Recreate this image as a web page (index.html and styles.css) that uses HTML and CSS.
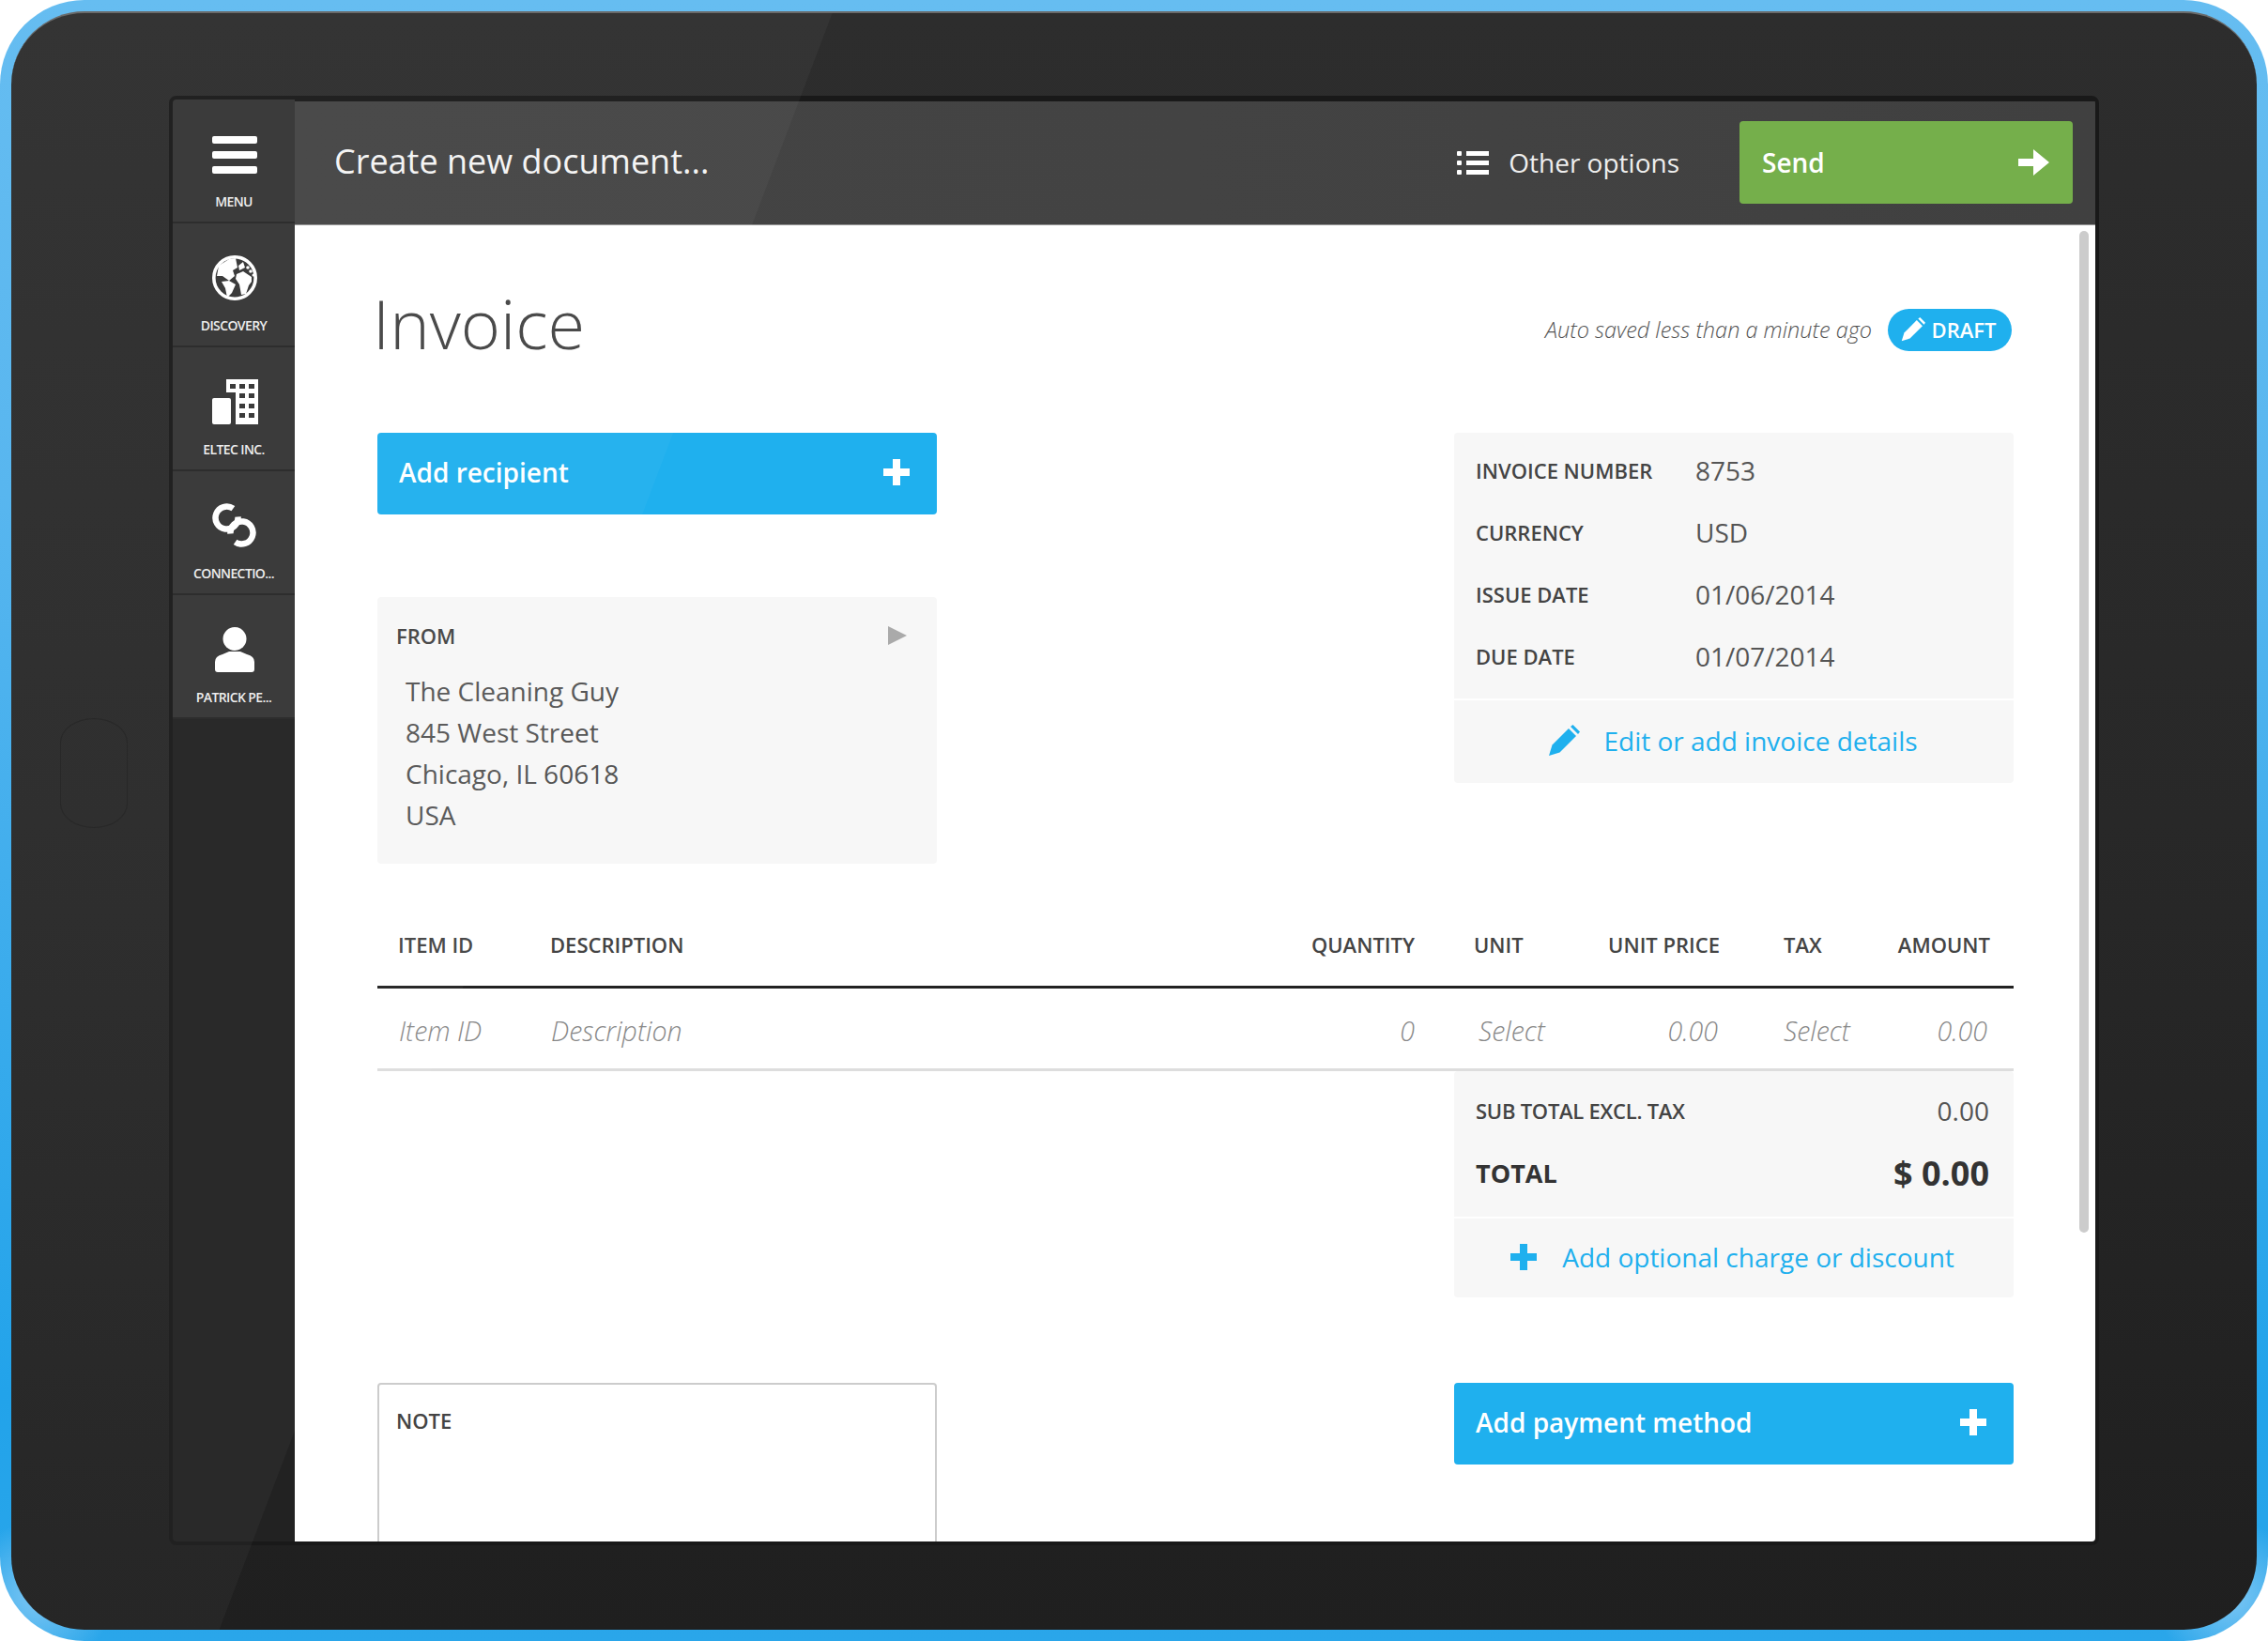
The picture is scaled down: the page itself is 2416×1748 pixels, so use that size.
FILE: index.html
```html
<!DOCTYPE html>
<html lang="en">
<head>
  <meta charset="utf-8">
  <title>Create new document</title>
  <link rel="stylesheet" href="styles.css">
</head>
<body>
<svg class="defs" width="0" height="0">
  <symbol id="pencil" viewBox="0 0 34 34">
    <path d="M1 33 L4.500 21.500 L22 4 L30 12 L12.500 29.500 Z"/>
    <path d="M24 2 L26.500 0 L34 7.500 L32 10 Z"/>
  </symbol>
  <symbol id="plus" viewBox="0 0 28 28">
    <path d="M10 0 H18 V10 H28 V18 H18 V28 H10 V18 H0 V10 H10 Z"/>
  </symbol>
</svg>

<div class="device">
  <div class="bezel">
    <div class="home"></div>
    <div class="screen">

      <nav class="sidebar">
        <a class="side-item menu-item">
          <svg class="side-icon" viewBox="0 0 48 40" width="48" height="40">
            <rect x="0" y="0" width="48" height="8" rx="2"/>
            <rect x="0" y="16" width="48" height="8" rx="2"/>
            <rect x="0" y="32" width="48" height="8" rx="2"/>
          </svg>
          <span>MENU</span>
        </a>
        <a class="side-item">
          <svg class="side-icon" viewBox="0 0 48 48" width="48" height="48">
            <circle cx="24" cy="24" r="22.200" fill="#343434" stroke="#fff" stroke-width="3.600"/>
            <path d="M7 11 L18 4 L25 3 L27 13 L22 16 L24 22 L18 27 L11 22 L5 22 Z"/>
            <path d="M10 28 L18 27 L25 31 L21 40 L16 45 L14 35 Z"/>
            <path d="M26 20 L33 17 L42 23 L42 28 L39 32 L36 41 L31 42 L29 31 L25 25 Z"/>
            <path d="M28 11 L33 7 L35 13 L29 16 Z"/>
            <circle cx="38" cy="13" r="1.800"/>
            <circle cx="41" cy="17" r="1.800"/>
            <circle cx="44" cy="21" r="1.500"/>
          </svg>
          <span>DISCOVERY</span>
        </a>
        <a class="side-item">
          <svg class="side-icon" viewBox="0 0 49 48" width="49" height="48">
            <rect x="0" y="20" width="20" height="28" rx="2"/>
            <path fill-rule="evenodd" d="M15 0 H49 V48 H25 V14 H15 Z M19 5 V10 H25 V5 Z M29 5 V10 H35 V5 Z M39 5 V10 H45 V5 Z M29 15 V20 H35 V15 Z M39 15 V20 H45 V15 Z M29 26 V31 H35 V26 Z M39 26 V31 H45 V26 Z M29 36 V41 H35 V36 Z M39 36 V41 H45 V36 Z"/>
          </svg>
          <span>ELTEC INC.</span>
        </a>
        <a class="side-item">
          <svg class="side-icon link-icon" viewBox="0 0 48 48" width="48" height="48">
            <path d="M22.400 5.700 A12 12 0 1 0 27.500 14.500"/>
            <path d="M24.600 41.300 A12 12 0 1 0 19.500 32.500"/>
          </svg>
          <span>CONNECTIO...</span>
        </a>
        <a class="side-item">
          <svg class="side-icon" viewBox="0 0 42 48" width="42" height="48">
            <circle cx="21" cy="12.500" r="12.500"/>
            <path d="M0 45 V37 Q0 31 8 29 L15 26 H27 L34 29 Q42 31 42 37 V45 Q42 48 39 48 H3 Q0 48 0 45 Z"/>
          </svg>
          <span>PATRICK PE...</span>
        </a>
      </nav>

      <div class="main">
        <header class="topbar">
          <div class="doc-title">Create new document...</div>
          <div class="options">
            <svg viewBox="0 0 34 28" width="34" height="28" fill="#fff">
              <rect x="0" y="2" width="5" height="5" rx="1"/>
              <rect x="0" y="12" width="5" height="5" rx="1"/>
              <rect x="0" y="22" width="5" height="5" rx="1"/>
              <rect x="10" y="2" width="24" height="5"/>
              <rect x="10" y="12" width="24" height="5"/>
              <rect x="10" y="22" width="24" height="5"/>
            </svg>
            <span>Other options</span>
          </div>
          <a class="send-btn">
            <span>Send</span>
            <svg viewBox="0 0 33 28" width="33" height="28" fill="#fff">
              <path d="M0 10 H16 V0 L33 14 L16 28 V18 H0 Z"/>
            </svg>
          </a>
        </header>

        <section class="content">
          <div class="scrollbar"></div>

          <div class="title-row">
            <h1>Invoice</h1>
            <div class="status">
              <span class="saved">Auto saved less than a minute ago</span>
              <span class="draft">
                <svg width="26" height="26"><use href="#pencil"/></svg>
                DRAFT
              </span>
            </div>
          </div>

          <div class="two-col top-row">
            <div class="col">
              <a class="big-btn"><span>Add recipient</span><svg width="28" height="28"><use href="#plus"/></svg></a>
              <div class="from-box">
                <div class="from-head">
                  <span class="label">FROM</span>
                  <i class="tri"></i>
                </div>
                <div class="address">
                  <div>The Cleaning Guy</div>
                  <div>845 West Street</div>
                  <div>Chicago, IL 60618</div>
                  <div>USA</div>
                </div>
              </div>
            </div>

            <div class="col">
              <div class="panel">
                <div class="meta">
                  <div class="meta-row"><span class="label">INVOICE NUMBER</span><span>8753</span></div>
                  <div class="meta-row"><span class="label">CURRENCY</span><span>USD</span></div>
                  <div class="meta-row"><span class="label">ISSUE DATE</span><span>01/06/2014</span></div>
                  <div class="meta-row"><span class="label">DUE DATE</span><span>01/07/2014</span></div>
                </div>
                <a class="panel-link edit-link">
                  <svg width="34" height="34"><use href="#pencil"/></svg>
                  <span>Edit or add invoice details</span>
                </a>
              </div>
            </div>
          </div>

          <div class="items">
            <div class="items-row items-head">
              <div>ITEM ID</div>
              <div>DESCRIPTION</div>
              <div class="num">QUANTITY</div>
              <div class="unit">UNIT</div>
              <div class="num">UNIT PRICE</div>
              <div class="tax">TAX</div>
              <div class="num">AMOUNT</div>
            </div>
            <div class="items-row items-blank">
              <div>Item ID</div>
              <div class="desc">Description</div>
              <div class="num">0</div>
              <div class="unit">Select</div>
              <div class="num price">0.00</div>
              <div class="tax">Select</div>
              <div class="num">0.00</div>
            </div>
          </div>

          <div class="panel totals">
            <div class="sums">
              <div class="sum-row"><span class="label sub-label">SUB TOTAL EXCL. TAX</span><span>0.00</span></div>
              <div class="sum-row grand"><span>TOTAL</span><span>$ 0.00</span></div>
            </div>
            <a class="panel-link charge-link">
              <svg width="28" height="28"><use href="#plus"/></svg>
              <span>Add optional charge or discount</span>
            </a>
          </div>

          <div class="two-col bottom-row">
            <div class="col">
              <div class="note"><span class="label">NOTE</span></div>
            </div>
            <div class="col">
              <a class="big-btn"><span>Add payment method</span><svg width="28" height="28"><use href="#plus"/></svg></a>
            </div>
          </div>
        </section>
      </div>

    </div>
    <div class="sheen"></div>
  </div>
</div>
</body>
</html>
```

FILE: styles.css
```css
html, body {
  margin: 0;
  background: #fff;
}
body {
  font-family: "Open Sans", "Liberation Sans", sans-serif;
  color: #444;
}
.defs {
  position: absolute;
}
a {
  display: block;
}

/* tablet frame */
.device {
  width: 2416px;
  height: 1748px;
  box-sizing: border-box;
  padding: 12px;
  border-radius: 90px;
  background:
    radial-gradient(circle 80px at 40px 1700px, #6cc0f2 20%, transparent 100%),
    radial-gradient(circle 80px at 2376px 1700px, #6cc0f2 20%, transparent 100%),
    linear-gradient(180deg, #66bdf1 0%, #58b6ef 30%, #22a3ea 85%, #2aa6ea 100%);
}
.bezel {
  position: relative;
  height: 1724px;
  box-sizing: border-box;
  padding: 88px 168px 0 168px;
  border-radius: 78px;
  border-top: 2px solid #6a6a6a;
  background: linear-gradient(180deg, #2d2d2d 0%, #282828 50%, #1f1f1f 100%);
  overflow: hidden;
}
.home {
  position: absolute;
  left: 52px;
  top: 751px;
  width: 72px;
  height: 117px;
  box-sizing: border-box;
  border: 1px solid #212121;
  border-radius: 36px / 26px;
}
.sheen {
  position: absolute;
  left: -12px;
  top: -14px;
  width: 2416px;
  height: 1748px;
  background: rgba(255, 255, 255, 0.035);
  clip-path: polygon(0 0, 892px 0, 229px 1748px, 0 1748px);
  pointer-events: none;
}
.screen {
  display: flex;
  height: 1536px;
  border: 4px solid #191919;
  border-radius: 8px;
  overflow: hidden;
  background: #222;
}

/* left rail */
.sidebar {
  width: 130px;
  flex: none;
}
.side-item {
  height: 130px;
  border-bottom: 2px solid #262626;
  background: #343434;
  display: flex;
  flex-direction: column;
  align-items: center;
  color: #eee;
  font-size: 14px;
  font-weight: 600;
  letter-spacing: -0.6px;
}
.side-item span {
  line-height: 20px;
  margin-top: 17px;
}
.side-icon {
  margin-top: 34px;
  margin-left: 2px;
  fill: #fff;
}
.menu-item .side-icon {
  margin-top: 39px;
}
.menu-item span {
  margin-top: 20px;
}
.link-icon {
  fill: none;
  stroke: #fff;
  stroke-width: 6.500;
}

.main {
  flex: 1;
  min-width: 0;
  display: flex;
  flex-direction: column;
}

/* top bar */
.topbar {
  height: 134px;
  flex: none;
  box-sizing: border-box;
  border-top: 2px solid #191919;
  border-bottom: 1px solid #999;
  background: linear-gradient(90deg, #444 0%, #434343 50%, #404040 100%);
  display: flex;
  align-items: center;
  padding: 0 24px 2px 42px;
  color: #fff;
}
.doc-title {
  flex: 1;
  font-size: 36px;
  color: #f4f4f4;
  margin-bottom: 2px;
}
.options {
  display: flex;
  align-items: center;
  gap: 21px;
  font-size: 28px;
  color: #eee;
  margin-right: 64px;
}
.send-btn {
  width: 355px;
  height: 88px;
  box-sizing: border-box;
  padding: 0 25px 0 24px;
  border-radius: 4px;
  background: #75af4b;
  display: flex;
  align-items: center;
  justify-content: space-between;
  font-size: 28px;
  font-weight: 600;
}

/* invoice body */
.content {
  position: relative;
  flex: 1;
  min-height: 0;
  overflow: hidden;
  padding: 0 87px 0 88px;
  background: #fff;
}
.scrollbar {
  position: absolute;
  right: 7px;
  top: 6px;
  width: 10px;
  height: 1067px;
  border-radius: 5px;
  background: #ccc;
}
.title-row {
  display: flex;
  justify-content: space-between;
  align-items: center;
  margin-top: 58px;
  height: 92px;
}
h1 {
  margin: 0 0 0 -5px;
  font-size: 72px;
  font-weight: 300;
  color: #444;
}
.status {
  display: flex;
  align-items: center;
  gap: 17px;
  margin-right: 2px;
  margin-top: 14px;
}
.saved {
  font-size: 23.500px;
  font-style: italic;
  font-weight: 300;
  color: #555;
}
.draft {
  width: 132px;
  height: 45px;
  box-sizing: border-box;
  padding-right: 3px;
  border-radius: 23px;
  background: #1fb0ee;
  color: #fff;
  fill: #fff;
  display: flex;
  align-items: center;
  justify-content: center;
  gap: 7px;
  font-size: 22px;
  font-weight: 600;
}
.two-col {
  display: flex;
  justify-content: space-between;
}
.col {
  width: 596px;
}
.top-row {
  margin-top: 71px;
}
.big-btn {
  height: 87px;
  box-sizing: border-box;
  padding: 0 29px 3px 23px;
  border-radius: 4px;
  background: #1fb0ee;
  color: #fff;
  fill: #fff;
  display: flex;
  align-items: center;
  justify-content: space-between;
  font-size: 28px;
  font-weight: 600;
}
.label {
  font-size: 22px;
  font-weight: 600;
  color: #444;
}
.from-box {
  margin-top: 88px;
  height: 284px;
  box-sizing: border-box;
  padding: 23px 32px 0 20px;
  border-radius: 4px;
  background: #f7f7f7;
}
.from-head {
  display: flex;
  justify-content: space-between;
  align-items: center;
  height: 36px;
}
.tri {
  width: 0;
  height: 0;
  border-left: 20px solid #aaa;
  border-top: 10px solid transparent;
  border-bottom: 10px solid transparent;
}
.address {
  margin: 19px 0 0 10px;
  font-size: 28px;
  line-height: 44px;
  color: #555;
}
.panel {
  border-radius: 4px;
  background: #f7f7f7;
}
.meta {
  padding: 7px 0 12px 23px;
}
.meta-row {
  display: grid;
  grid-template-columns: 234px 1fr;
  align-items: center;
  height: 66px;
  font-size: 28px;
  color: #555;
}
.panel-link {
  border-top: 2px solid #fff;
  display: flex;
  align-items: center;
  justify-content: center;
  box-sizing: border-box;
  padding-bottom: 3px;
  font-size: 28px;
  color: #1fb0ee;
  fill: #1fb0ee;
}
.edit-link {
  height: 90px;
  gap: 25px;
  padding-right: 2px;
}

/* line items */
.items {
  margin-top: 45px;
}
.items-row {
  display: grid;
  grid-template-columns: 184px 784px 137px 173px 152px 168px 145px;
  align-items: center;
  height: 85px;
}
.items-row .num {
  text-align: right;
}
.items-head {
  border-bottom: 3px solid #222;
  font-size: 22px;
  font-weight: 600;
  color: #444;
}
.items-head > div {
  margin-bottom: 4px;
}
.items-head > div:first-child {
  padding-left: 22px;
}
.items-head > div:last-child {
  padding-right: 25px;
}
.items-head .unit {
  padding-left: 63px;
}
.items-head .tax {
  padding-left: 68px;
}
.items-blank {
  border-bottom: 3px solid #ddd;
  font-size: 28.500px;
  font-style: italic;
  font-weight: 300;
  color: #888;
}
.items-blank > div {
  margin-top: 4px;
}
.items-blank > div:first-child {
  padding-left: 23px;
}
.items-blank > div:last-child {
  padding-right: 28px;
}
.items-blank .desc {
  padding-left: 1px;
}
.items-blank .price {
  padding-right: 2px;
}
.items-blank .unit,
.items-blank .tax {
  padding-left: 68px;
}

.totals {
  width: 596px;
  margin-left: auto;
}
.sums {
  padding: 9px 26px 14px 23px;
}
.sum-row {
  display: flex;
  justify-content: space-between;
  align-items: center;
  height: 66px;
  font-size: 28px;
  color: #555;
}
.sub-label {
  letter-spacing: -0.25px;
}
.grand {
  font-size: 27px;
  font-weight: 700;
  color: #333;
}
.grand span:last-child {
  font-size: 36px;
}
.charge-link {
  height: 86px;
  gap: 27px;
  padding-right: 3px;
}
.bottom-row {
  margin-top: 91px;
}
.note {
  height: 300px;
  box-sizing: border-box;
  padding: 23px 18px;
  border: 2px solid #ccc;
  border-radius: 4px;
}
```
